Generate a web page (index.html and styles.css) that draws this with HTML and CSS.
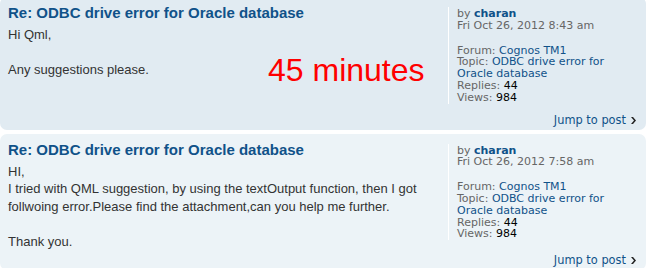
FILE: index.html
```html
<!DOCTYPE html>
<html lang="en">
<head>
  <meta charset="UTF-8" />
  <title>Search results</title>
  <link rel="stylesheet" href="styles.css">
</head>
<body>

  <div class="results">

    <!-- First result -->
    <div class="post bg2">
      <div class="post-inner">
        <div class="postbody">
          <h3><a href="#">Re: ODBC drive error for Oracle database</a></h3>
          <div class="content">Hi Qml,<br /><br />Any suggestions please.</div>
        </div>
        <dl class="postprofile">
          <dt>by <a class="author" href="#">charan</a></dt>
          <dd>Fri Oct 26, 2012 8:43 am</dd>
          <dd class="spacer"></dd>
          <dd>Forum: <a href="#">Cognos TM1</a></dd>
          <dd>Topic: <a href="#">ODBC drive error for<br />Oracle database</a></dd>
          <dd>Replies: <strong>44</strong></dd>
          <dd>Views: <strong>984</strong></dd>
        </dl>
      </div>
      <div class="jump"><a href="#">Jump to post<svg class="arrow" width="5" height="7" viewBox="0 0 5 7"><path d="M0 0h2l3 3.5-3 3.5h-2l3-3.5z" fill="#222"/></svg></a></div>
      <div class="stamp">45 minutes</div>
    </div>

    <!-- Second result -->
    <div class="post bg1">
      <div class="post-inner">
        <div class="postbody">
          <h3><a href="#">Re: ODBC drive error for Oracle database</a></h3>
          <div class="content">HI,<br />I tried with QML suggestion, by using the textOutput function, then I got follwoing error.Please find the attachment,can you help me further.<br /><br />Thank you.</div>
        </div>
        <dl class="postprofile">
          <dt>by <a class="author" href="#">charan</a></dt>
          <dd>Fri Oct 26, 2012 7:58 am</dd>
          <dd class="spacer"></dd>
          <dd>Forum: <a href="#">Cognos TM1</a></dd>
          <dd>Topic: <a href="#">ODBC drive error for<br />Oracle database</a></dd>
          <dd>Replies: <strong>44</strong></dd>
          <dd>Views: <strong>984</strong></dd>
        </dl>
      </div>
      <div class="jump"><a href="#">Jump to post<svg class="arrow" width="5" height="7" viewBox="0 0 5 7"><path d="M0 0h2l3 3.5-3 3.5h-2l3-3.5z" fill="#222"/></svg></a></div>
    </div>

  </div>

</body>
</html>
```

FILE: styles.css
```css
body {
  margin: 0;
  background: #fff;
  color: #333;
  font-family: "Liberation Sans", Arial, sans-serif;
}
a {
  color: #105289;
  text-decoration: none;
}
.results {
  margin-top: -3px;
}
.post {
  position: relative;
  border-radius: 7px;
  padding: 0 10px 3px 8px;
  margin-bottom: 4px;
}
.bg1 {
  background: #ecf3f7;
}
.bg2 {
  background: #e1ebf2;
}
.post-inner {
  display: flex;
  align-items: flex-start;
}
.postbody {
  width: 440px;
  flex: 0 0 440px;
  padding-bottom: 4px;
}
.postbody h3 {
  margin: 7px 0 4px;
  font-size: 15px;
  line-height: 18px;
  font-weight: bold;
}
.content {
  font-size: 13px;
  line-height: 17.5px;
}
.postprofile {
  flex: 1;
  margin: 10px 0 10px;
  padding: 1px 4px 0 8px;
  border-left: 1px solid #fff;
  font-family: "DejaVu Sans", Verdana, sans-serif;
  font-size: 11px;
  line-height: 11.8px;
  color: #666;
}
.postprofile dt,
.postprofile dd {
  margin: 0;
}
.postprofile .spacer {
  height: 13px;
}
.postprofile .author {
  font-weight: bold;
}
.postprofile strong {
  color: #000;
  font-weight: normal;
}
.jump {
  text-align: right;
  font-family: "DejaVu Sans", Verdana, sans-serif;
  font-size: 11.4px;
  line-height: 13px;
}
.jump .arrow {
  margin-left: 5px;
  vertical-align: 0;
}
.stamp {
  position: absolute;
  left: 268px;
  top: 57px;
  font-family: "Liberation Sans", Tahoma, sans-serif;
  font-size: 32px;
  line-height: 1;
  color: #ff0000;
}
```
